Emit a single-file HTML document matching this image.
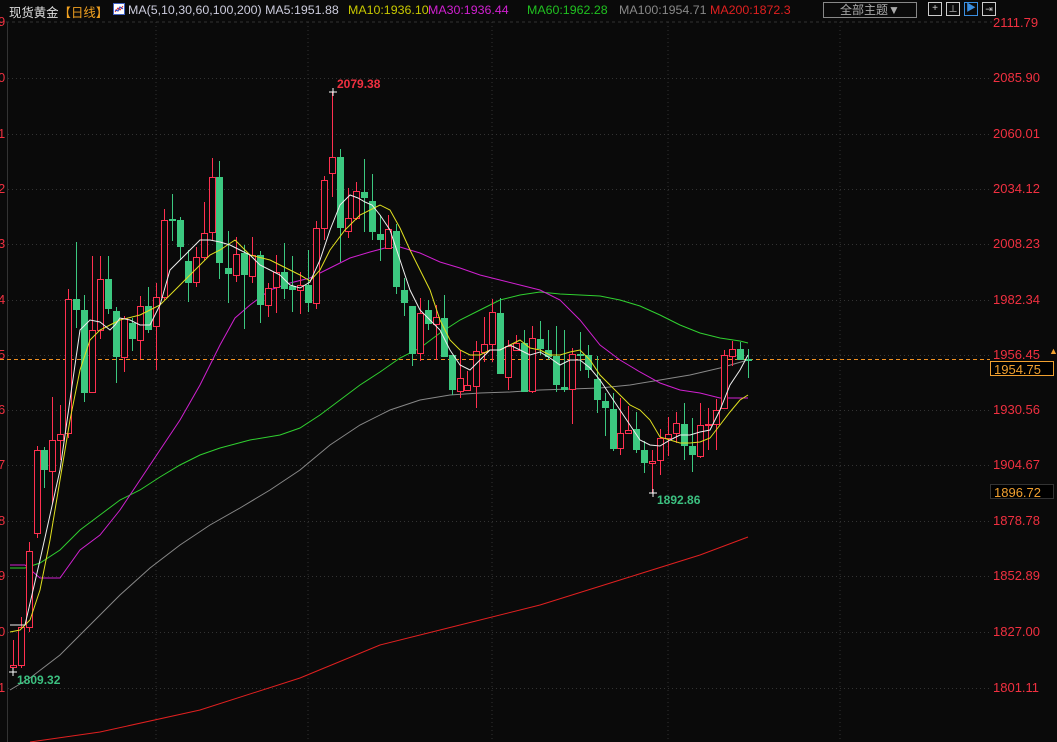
<!DOCTYPE html>
<html><head><meta charset="utf-8"><style>
body{margin:0;background:#0a0a0a;width:1057px;height:742px;overflow:hidden;font-family:"Liberation Sans","Noto Sans CJK SC",sans-serif;}
.t{position:absolute;font-size:13px;white-space:nowrap;}
.h{font-size:12.4px;}
</style></head><body>
<svg id="s" width="1057" height="742" style="position:absolute;left:0;top:0" xmlns="http://www.w3.org/2000/svg"></svg>
<div class="t h" style="left:9px;top:3px;color:#ddd">现货黄金<span style="color:#f0a020">【日线】</span></div>
<div class="t" style="left:113px;top:3px;width:12px;height:12px;background:#fff;border:1px solid #4060c0;box-sizing:border-box"><svg width="10" height="10" style="position:absolute;left:0;top:0"><polyline points="1,8 4,4 6,6 9,2" fill="none" stroke="#e02020"/><polyline points="1,6 4,7 6,3 9,5" fill="none" stroke="#2040c0"/></svg></div>
<div class="t h" style="left:128px;top:3px;color:#ccd">MA(5,10,30,60,100,200) MA5:1951.88</div>
<div class="t h" style="left:348px;top:3px;color:#c8c800">MA10:1936.10</div>
<div class="t h" style="left:428px;top:3px;color:#d020d0">MA30:1936.44</div>
<div class="t h" style="left:527px;top:3px;color:#20c020">MA60:1962.28</div>
<div class="t h" style="left:619px;top:3px;color:#888">MA100:1954.71</div>
<div class="t h" style="left:710px;top:3px;color:#e02020">MA200:1872.3</div>
<div class="t" style="left:823px;top:2px;width:92px;height:14px;border:1px solid #888;color:#aaa;text-align:center;line-height:14px;font-size:12px">全部主题▼</div>
<div class="t" style="left:928px;top:2px;width:12px;height:12px;border:1px solid #ccc;color:#ccc;font-size:10px;line-height:12px;text-align:center">+</div>
<div class="t" style="left:946px;top:2px;width:12px;height:12px;border:1px solid #ccc;color:#ccc;font-size:9px;line-height:12px;text-align:center">⊥</div>
<div class="t" style="left:964px;top:2px;width:12px;height:12px;border:1px solid #3a8ee0;color:#3a8ee0;font-size:10px;line-height:12px;text-align:center">▶</div>
<div class="t" style="left:982px;top:2px;width:12px;height:12px;border:1px solid #ccc;color:#ccc;font-size:9px;line-height:12px;text-align:center">⇥</div>
<div id="lab"></div>
<div class="t" style="left:337px;top:77px;color:#f03040;font-weight:bold;font-size:12px">2079.38</div>
<div class="t" style="left:17px;top:673px;color:#3cc080;font-weight:bold;font-size:12px">1809.32</div>
<div class="t" style="left:657px;top:493px;color:#3cc080;font-weight:bold;font-size:12px">1892.86</div>
<div class="t" style="left:990px;top:361px;height:15px;border:1px solid #f0a030;color:#f0a030;line-height:15px;padding-left:3px;box-sizing:border-box;width:64px;background:#000">1954.75</div>
<div class="t" style="left:990px;top:484px;width:64px;height:15px;border:1px solid #333;color:#f0a030;line-height:15px;padding-left:3px;box-sizing:border-box;background:#000">1896.72</div>
<div class="t" style="left:1049px;top:346px;color:#f0a030;font-size:9px">▲</div>
<script>
var s=document.getElementById('s'),h='';
var lv=[[23,'2111.79'],[78,'2085.90'],[134,'2060.01'],[189,'2034.12'],[244,'2008.23'],[300,'1982.34'],[355,'1956.45'],[410,'1930.56'],[465,'1904.67'],[521,'1878.78'],[576,'1852.89'],[632,'1827.00'],[688,'1801.11']];
var ll=['0','1','2','3','4','5','6','7','8','9','0','1'],lab='';
lv.forEach(function(l,i){if(i>0)h+='<line x1="8" x2="990" y1="'+(l[0]+.5)+'" y2="'+(l[0]+.5)+'" stroke="#333" stroke-dasharray="1,3"/>';
lab+='<div class="t" style="left:993px;top:'+(l[0]-8)+'px;color:#f03040">'+l[1]+'</div>';
if(i>0)lab+='<div class="t" style="left:-2px;top:'+(l[0]-8)+'px;color:#f03040">'+ll[i-1]+'</div>';});
lab+='<div class="t" style="left:-2px;top:14px;color:#f03040">9</div>';
document.getElementById('lab').innerHTML=lab;
h+='<line x1="0" x2="992" y1="22" y2="22" stroke="#333" stroke-dasharray="3,3"/>';
[156,308,492,668,840].forEach(function(x){h+='<line x1="'+x+'" x2="'+x+'" y1="22" y2="742" stroke="#333" stroke-dasharray="1,3"/>';});
h+='<line x1="7.5" x2="7.5" y1="22" y2="742" stroke="#333"/>';
h+='<line x1="0" x2="990" y1="359.5" y2="359.5" stroke="#f09020" stroke-dasharray="4,3"/>';
function pl(p,c){h+='<polyline fill="none" stroke="'+c+'" stroke-width="1" points="'+p+'"/>';}
pl("30,742 100,732 200,710 300,678 380,645 460,625 540,605 620,580 700,555 748,537","#e02020");
pl("10,690 30,678 60,655 90,625 120,595 150,568 180,545 210,525 240,508 270,490 300,470 330,445 360,425 390,410 420,400 450,395 480,393 510,392 540,390 570,389 600,388 630,385 660,380 690,375 720,368 748,360","#888");
pl("10,568 25,568 40,563 60,550 80,530 100,515 120,500 140,490 160,477 180,465 200,455 220,448 250,440 280,435 300,428 320,415 340,400 360,385 380,372 400,358 420,348 440,333 460,320 480,310 500,300 520,295 540,292 560,294 580,295 600,296 620,300 640,306 660,315 680,325 700,333 720,338 740,341 748,343","#30d030");
pl("10,565 25,565 40,578 60,578 80,550 100,535 120,510 140,480 160,450 180,420 200,385 220,345 235,318 250,305 270,290 290,283 310,278 330,268 350,258 370,252 385,248 400,247 420,253 440,262 460,268 480,275 500,280 520,285 540,290 560,300 580,320 600,345 620,360 640,372 660,383 680,390 700,393 720,398 748,398","#d020d0");
var d=[[13,665,667,640,668,1],[21,627,665,617,668,1],[29,551,627,542,632,1],[37,450,533,446,538,1],[44,450,470,447,488,0],[52,440,471,397,504,1],[60,434,440,405,460,1],[68,299,433,289,438,1],[76,299,310,242,328,0],[84,310,393,295,402,0],[92,330,392,256,338,1],[100,279,330,256,339,1],[108,279,309,256,314,0],[116,311,357,307,383,0],[124,318,357,316,372,1],[132,323,339,318,351,0],[140,306,340,296,359,1],[148,306,330,287,333,0],[156,297,326,283,370,1],[164,220,297,209,300,1],[172,219,221,194,241,0],[180,220,247,217,260,0],[188,261,283,250,302,0],[196,257,282,247,287,1],[204,233,257,202,260,1],[212,177,232,158,240,1],[219,177,263,161,279,0],[228,268,274,231,303,0],[236,254,275,237,282,1],[244,253,275,245,329,0],[252,255,276,237,283,1],[260,255,305,251,323,0],[268,288,305,283,317,1],[276,272,287,255,313,1],[284,272,289,243,299,0],[292,286,290,256,312,0],[300,285,290,272,314,1],[308,285,303,250,312,0],[316,228,303,221,309,1],[324,180,228,176,240,1],[332,157,173,92,197,1],[340,157,228,149,262,0],[348,218,231,188,238,1],[356,191,218,182,220,1],[364,192,198,159,232,0],[372,201,232,174,240,0],[380,234,240,215,261,0],[388,229,248,215,249,1],[396,231,287,224,294,0],[404,290,303,278,316,0],[412,306,354,306,366,0],[420,313,353,298,361,1],[428,310,324,300,330,0],[436,317,324,305,360,1],[444,318,357,295,352,0],[452,355,390,355,395,0],[460,378,391,350,398,1],[467,385,390,371,390,1],[476,351,386,341,408,1],[484,344,352,317,362,1],[492,312,344,299,362,1],[500,313,374,298,374,0],[508,346,377,340,390,1],[516,343,350,335,350,1],[524,343,392,330,392,0],[532,338,391,326,393,1],[540,339,349,321,355,0],[548,350,357,330,360,0],[556,356,385,326,392,0],[564,387,390,330,392,0],[572,354,389,348,424,1],[580,354,356,332,371,0],[588,355,370,345,378,0],[597,379,400,356,413,0],[605,401,408,393,436,0],[613,409,449,393,451,0],[620,433,448,398,455,1],[628,430,433,406,420,1],[636,429,450,412,453,0],[644,450,463,441,473,0],[652,461,463,450,493,1],[660,438,460,429,475,1],[668,434,438,417,456,1],[676,423,433,412,443,1],[684,424,446,403,460,0],[692,446,455,418,472,0],[700,425,456,403,458,1],[708,424,425,408,450,1],[716,410,424,399,450,1],[724,355,408,350,402,1],[732,349,356,341,366,1],[740,349,360,342,359,0],[748,359,361,349,378,0]];
d.forEach(function(c){var x=c[0],col=c[5]?'#ff3050':'#3cc880';
h+='<line x1="'+(x+.5)+'" x2="'+(x+.5)+'" y1="'+c[3]+'" y2="'+c[1]+'" stroke="'+col+'"/>';
h+='<line x1="'+(x+.5)+'" x2="'+(x+.5)+'" y1="'+c[2]+'" y2="'+c[4]+'" stroke="'+col+'"/>';
var bh=Math.max(1,c[2]-c[1]);
if(c[5])h+='<rect x="'+(x-2.5)+'" y="'+(c[1]+.5)+'" width="6" height="'+bh+'" fill="#0a0a0a" stroke="'+col+'"/>';
else h+='<rect x="'+(x-3)+'" y="'+c[1]+'" width="7" height="'+bh+'" fill="'+col+'"/>';});
pl("10,632 20,630 30,620 40,590 50,540 60,480 70,420 80,370 90,340 100,330 110,325 120,320 140,315 160,305 175,290 190,275 200,265 210,255 220,250 235,240 250,255 270,260 290,270 300,275 310,281 320,270 330,250 345,230 360,215 380,205 390,210 400,228 410,250 420,270 430,290 440,320 450,340 460,350 470,355 480,355 490,350 500,350 510,345 520,340 530,348 540,350 550,355 560,355 570,352 580,350 590,360 600,375 610,385 620,395 630,405 640,410 650,420 660,437 670,440 680,443 690,443 700,442 710,438 720,425 730,412 740,400 748,395","#e0e020");
pl("10,625 25,625 40,560 60,470 70,400 80,330 90,320 100,322 110,330 115,325 120,318 130,320 140,325 150,325 160,305 170,270 180,260 190,250 200,240 210,240 220,242 230,245 240,250 250,255 260,265 270,270 280,275 290,285 300,288 310,282 320,260 330,230 340,205 350,195 358,198 365,202 372,205 380,215 390,230 400,260 410,290 420,310 430,320 440,330 450,350 460,365 470,370 480,360 490,350 500,350 510,345 520,350 530,355 540,352 550,358 560,365 570,360 580,360 590,368 600,380 610,395 620,410 630,425 640,440 650,445 660,446 670,440 680,435 690,435 700,432 710,430 720,410 730,385 740,370 748,355","#eee");
h+='<path d="M329 92h8M333 88v8M9 672h8M13 668v8M649 493h8M653 489v8" stroke="#fff"/>';
s.innerHTML=h;
</script>
</body></html>
